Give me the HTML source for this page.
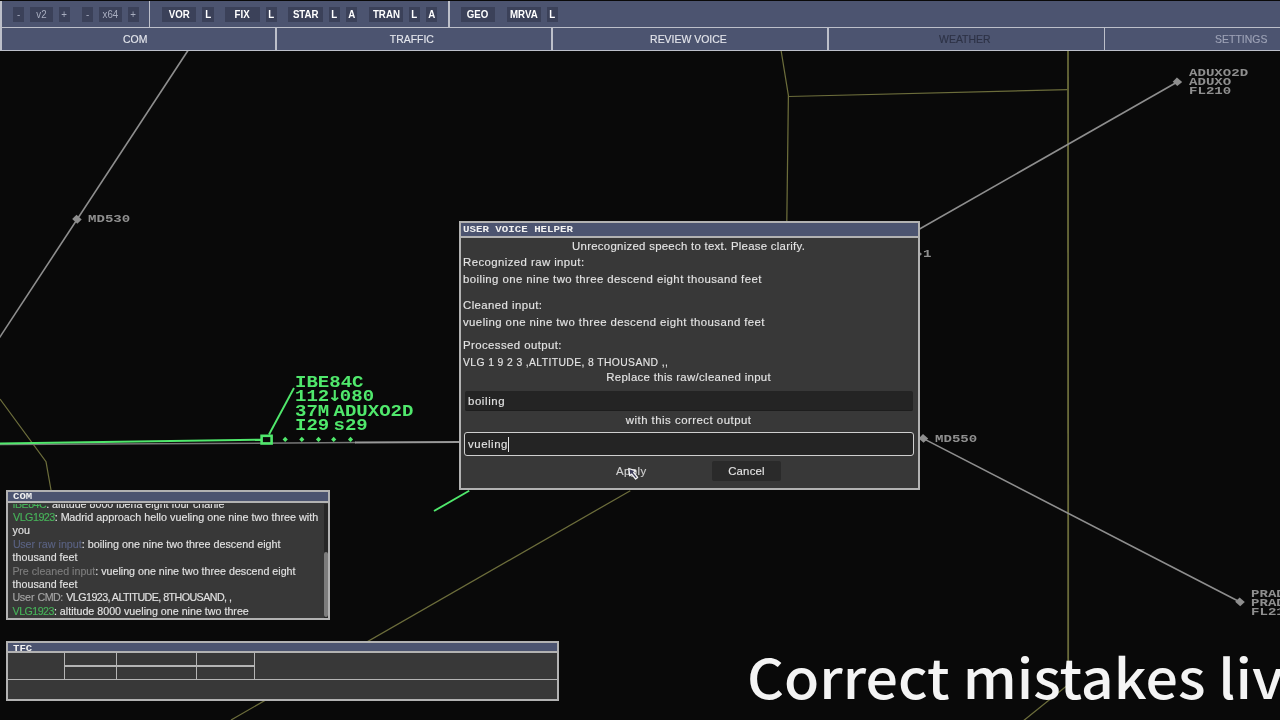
<!DOCTYPE html>
<html lang="en">
<head>
<meta charset="utf-8">
<title>ATC Voice Helper</title>
<style>
html,body{margin:0;padding:0;background:#090909;}
body{width:1280px;height:720px;position:relative;overflow:hidden;font-family:"Liberation Sans",sans-serif;color:#e0e0e0;}
.abs{position:absolute;}
#stage{position:absolute;left:0;top:0;width:1280px;height:720px;overflow:hidden;will-change:transform;}
#radar{position:absolute;left:0;top:0;width:1280px;height:720px;}
/* top bar */
#topbar{position:absolute;left:0;top:1px;width:1280px;height:49px;background:#4c5470;}
#topbar .hl{position:absolute;left:0;width:1280px;height:1.6px;background:#bdc0ca;}
#topbar .vl{position:absolute;width:1.6px;background:#bdc0ca;}
.tb{position:absolute;top:6px;height:15px;background:#3b4159;color:#fff;font-weight:bold;font-size:10.4px;line-height:15.6px;text-align:center;white-space:nowrap;}
.tb.dim{color:#a9aec0;font-weight:normal;}
.tb span{display:inline-block;transform-origin:50% 50%;transform:scaleX(.935);}
.tab{position:absolute;top:28px;height:21px;line-height:21.6px;font-size:11.3px;text-align:center;white-space:nowrap;color:#e4e6ec;}
.tab span{-webkit-text-stroke:.14px currentColor;display:inline-block;transform:scaleX(.925);transform-origin:50% 50%;}
/* windows */
.win{position:absolute;background:#383838;border:2px solid #b2b2b2;box-sizing:border-box;}
.win .title{position:absolute;left:0;top:0;right:0;background:#4c5470;border-bottom:2px solid #b2b2b2;font-family:"Liberation Mono",monospace;font-weight:bold;color:#f0f0f0;white-space:nowrap;overflow:hidden;}
.win .title span{display:inline-block;transform-origin:0 50%;}
.mono{font-family:"Liberation Mono",monospace;font-weight:bold;white-space:nowrap;}
.dl{position:absolute;left:2px;white-space:nowrap;font-size:11.4px;line-height:14px;color:#e4e4e4;letter-spacing:.42px;}
.dc{position:absolute;left:-.9px;width:457px;text-align:center;white-space:nowrap;font-size:11.4px;line-height:14px;color:#e4e4e4;letter-spacing:.49px;}
.cl{position:absolute;left:4.6px;white-space:nowrap;font-size:10.7px;line-height:13.4px;color:#e2e2e2;transform-origin:0 0;}
.u{letter-spacing:-.55px;}
.dl,.dc,.cl{-webkit-text-stroke:.14px currentColor;}
.g{color:#47b35a;}
.b{color:#5a6282;}
.gr{color:#7d7d7d;}
.lg{color:#a6a6a6;}
#big{position:absolute;left:747.4px;top:640px;transform:scaleX(1.061);transform-origin:0 0;font-family:"Noto Sans CJK SC","Liberation Sans",sans-serif;font-weight:500;font-size:54.06px;line-height:72px;color:#f4f4f4;white-space:nowrap;}

.wl{position:absolute;font-size:11.8px;line-height:8.7px;color:#8f8f8f;transform:scaleX(1.192);transform-origin:0 0;padding-top:3px;}
.acl{position:absolute;font-size:16.2px;line-height:14.42px;color:#50e86c;transform:scaleX(1.175);transform-origin:0 0;}
.acl .sp{display:inline-block;width:3.6px;}
.acl .ar{display:inline-block;width:9px;text-align:center;font-family:"DejaVu Sans",sans-serif;font-size:15px;line-height:10px;text-indent:-1.5px;}
</style>
</head>
<body>
<div id="stage">
<svg id="radar" viewBox="0 0 1280 720">
<g fill="none" stroke-linecap="butt">
 <!-- olive sector lines -->
 <g stroke="#6c6d3b" stroke-width="1.25">
  <polyline points="0,399 46,461.7 51,490 53,505"/>
  <polyline points="781,50 788.4,95.5 786.8,222"/>
  <polyline points="788.4,96.5 1067.5,89.6"/>
  <line x1="1068" y1="50" x2="1068.2" y2="685.3" stroke-width="1.8" stroke="#696a3a"/><line x1="1068.4" y1="684.6" x2="1023.7" y2="720.5"/>
  <line x1="231" y1="720" x2="630.3" y2="490.7"/>
 </g>
 <!-- grey route lines -->
 <g stroke="#8e8e8e" stroke-width="1.6">
  <line x1="188.3" y1="50" x2="-1" y2="338.4"/>
  <line x1="1177.3" y1="82" x2="913" y2="232.8"/>
  <line x1="923.4" y1="438.6" x2="1240" y2="602"/>
  <line x1="0" y1="444.6" x2="356" y2="442.6" stroke="#777" stroke-width="1.5"/><line x1="355" y1="442.5" x2="460" y2="441.9" stroke="#999" stroke-width="2"/>
 </g>
 <!-- aircraft track -->
 <g stroke="#50e86c" stroke-width="2">
  <line x1="0" y1="443.6" x2="261" y2="439.7"/>
  <rect x="261.6" y="435.8" width="10" height="7.7" stroke-width="2.6"/>
  <line x1="269" y1="434.5" x2="294" y2="388" stroke-width="1.9"/>
  <line x1="434" y1="511" x2="469.2" y2="490.7" stroke-width="1.9"/>
 </g>
</g>
<g fill="#50e86c">
 <path d="M285.2 436.8l2.6 2.6-2.6 2.6-2.6-2.6z"/>
 <path d="M301.8 436.8l2.6 2.6-2.6 2.6-2.6-2.6z"/>
 <path d="M318.5 436.8l2.6 2.6-2.6 2.6-2.6-2.6z"/>
 <path d="M333.7 436.8l2.6 2.6-2.6 2.6-2.6-2.6z"/>
 <path d="M350.5 436.8l2.6 2.6-2.6 2.6-2.6-2.6z"/>
</g>
<g fill="#8e8e8e">
 <path d="M72.2 219.1l4.3-4.3 5.2 4.6-4.4 4.3z"/>
 <path d="M1172.7 81.7l4.2-4.2 5.3 4.5-4.9 4z"/>
 <path d="M918.6 438.4l4.4-4.4 5.2 4.6-4.6 4.2z"/>
 <path d="M1235.2 601.8l4.4-4.4 5.2 4.6-4.6 4.2z"/>
 <path d="M912.4 253.8l4.4-4.4 5.2 4.6-4.6 4.2z"/>
</g>
</svg>
<div id="topbar">
<div class="hl" style="top:25.9px"></div><div class="hl" style="top:48.6px"></div>
<div class="vl" style="left:.4px;top:0;height:50px"></div>
<div class="vl" style="left:148.5px;top:0;height:27px"></div><div class="vl" style="left:448px;top:0;height:27px"></div><div class="vl" style="left:275.2px;top:27px;height:22px"></div><div class="vl" style="left:551.3px;top:27px;height:22px"></div><div class="vl" style="left:827.4px;top:27px;height:22px"></div><div class="vl" style="left:1103.5px;top:27px;height:22px"></div>
<div class="tb dim" style="left:13px;width:11px"><span>-</span></div><div class="tb dim" style="left:30px;width:23px"><span>v2</span></div><div class="tb dim" style="left:59px;width:11px"><span>+</span></div><div class="tb dim" style="left:82px;width:11px"><span>-</span></div><div class="tb dim" style="left:99px;width:23px"><span>x64</span></div><div class="tb dim" style="left:128px;width:11px"><span>+</span></div><div class="tb" style="left:162px;width:34px"><span>VOR</span></div><div class="tb" style="left:202px;width:12px"><span>L</span></div><div class="tb" style="left:225px;width:35px"><span>FIX</span></div><div class="tb" style="left:266px;width:11px"><span>L</span></div><div class="tb" style="left:288px;width:35px"><span>STAR</span></div><div class="tb" style="left:329px;width:11px"><span>L</span></div><div class="tb" style="left:346px;width:11px"><span>A</span></div><div class="tb" style="left:369px;width:34px"><span>TRAN</span></div><div class="tb" style="left:409px;width:11px"><span>L</span></div><div class="tb" style="left:426px;width:11px"><span>A</span></div><div class="tb" style="left:461px;width:34px"><span>GEO</span></div><div class="tb" style="left:507px;width:34px"><span>MRVA</span></div><div class="tb" style="left:547px;width:11px"><span>L</span></div>
<div class="tab" style="left:75.6px;width:120px;color:#e4e6ec"><span>COM</span></div><div class="tab" style="left:351.8px;width:120px;color:#e4e6ec"><span>TRAFFIC</span></div><div class="tab" style="left:628.3px;width:120px;color:#e4e6ec"><span>REVIEW VOICE</span></div><div class="tab" style="left:904.6px;width:120px;color:#2d3245"><span>WEATHER</span></div><div class="tab" style="left:1180.9px;width:120px;color:#9da2b6"><span>SETTINGS</span></div>
</div>

<!-- waypoint labels -->
<div class="mono wl" style="left:88.2px;top:212px;">MD530</div>
<div class="mono wl" style="left:935px;top:431.8px;">MD550</div>
<div class="mono wl" style="left:1188.6px;top:66.2px;">ADUXO2D<br>ADUXO<br>FL210</div>
<div class="mono wl" style="left:1251px;top:587.2px;">PRADO1B<br>PRADO<br>FL210</div>
<div class="mono wl" style="left:922.6px;top:246.6px;">1</div>
<!-- aircraft label -->
<div class="mono acl" style="left:295.3px;top:375.7px;">IBE84C<br>112<span class="ar">&#8595;</span>080<br>37M<span class="sp"></span>ADUXO2D<br>I29<span class="sp"></span>s29</div>

<!-- USER VOICE HELPER dialog -->
<div class="win" id="dlg" style="left:459px;top:220.7px;width:460.6px;height:269.2px;">
 <div class="title" style="height:13px;font-size:9.1px;line-height:13px;padding-left:2px;"><span style="transform:scaleX(1.185)">USER VOICE HELPER</span></div>
 <div class="dc" style="top:16.2px;letter-spacing:.28px;">Unrecognized speech to text. Please clarify.</div>
 <div class="dl" style="top:32.3px;">Recognized raw input:</div>
 <div class="dl" style="top:49.6px;">boiling one nine two three descend eight thousand feet</div>
 <div class="dl" style="top:75.3px;">Cleaned input:</div>
 <div class="dl" style="top:92.3px;">vueling one nine two three descend eight thousand feet</div>
 <div class="dl" style="top:115.3px;">Processed output:</div>
 <div class="dl" style="top:132.6px;transform:scaleX(.91);transform-origin:0 0;">VLG 1 9 2 3 ,ALTITUDE, 8 THOUSAND ,,</div>
 <div class="dc" style="top:147.5px;letter-spacing:.32px;">Replace this raw/cleaned input</div>
 <div class="abs" style="left:4px;top:168px;width:448px;height:19px;background:#242424;border-bottom:1px solid #1d1d1d;border-radius:2px;"></div>
 <div class="dl" style="left:7px;top:171.4px;letter-spacing:.6px;">boiling</div>
 <div class="dc" style="top:190.5px;">with this correct output</div>
 <div class="abs" style="left:3px;top:209px;width:450.3px;height:24px;box-sizing:border-box;background:#242424;border:1.9px solid #cfcfcf;border-radius:3px;"></div>
 <div class="dl" style="left:7px;top:214.4px;letter-spacing:.55px;">vueling</div>
 <div class="abs" style="left:46.7px;top:214px;width:1.2px;height:15px;background:#e8e8e8;"></div>
 <div class="dl" style="left:155px;top:241.3px;color:#cfcfcf;">Apply</div>
 <div class="abs" style="left:251px;top:238px;width:69px;height:20px;background:#2a2a2a;border-radius:2px;"></div>
 <div class="dl" style="left:251px;width:69px;text-align:center;top:241.3px;letter-spacing:.2px;">Cancel</div>
</div>

<svg class="abs" style="left:620px;top:460px;" width="24" height="24" viewBox="620 460 24 24"><path d="M628.8 468.5L635.6 470.9L633.7 472.5L637.6 477.4L635.6 479L631.7 474.1L629.7 475.7Z" fill="#3b3b58" stroke="#f2f2f2" stroke-width="1.3" stroke-linejoin="round"/></svg>
<!-- COM window -->
<div class="win" id="com" style="left:6px;top:490.2px;width:324px;height:129.8px;">
 <div class="title" style="height:9px;font-size:8.2px;line-height:9px;padding-left:5px;"><span style="transform:scaleX(1.3)">COM</span></div>
 <div class="abs" id="comtxt" style="left:0;top:11.8px;width:316px;height:114px;overflow:hidden;">
  <div class="cl" id="c0" style="top:-6.4px;"><span class="g u">IBE84C</span>: altitude 8000 iberia eight four charlie</div>
  <div class="cl" id="c1" style="top:7px;transform:scaleX(1.01);"><span class="g u">VLG1923</span>: <span class="u">M</span>adrid approach hello vueling one nine two three with</div>
  <div class="cl" id="c2" style="top:20.4px;">you</div>
  <div class="cl" id="c3" style="top:33.8px;transform:scaleX(1.007);"><span class="b"><span class="u">U</span>ser raw input</span>: boiling one nine two three descend eight</div>
  <div class="cl" id="c4" style="top:47.2px;">thousand feet</div>
  <div class="cl" id="c5" style="top:60.6px;"><span class="gr"><span class="u">P</span>re cleaned input</span>: vueling one nine two three descend eight</div>
  <div class="cl" id="c6" style="top:74px;">thousand feet</div>
  <div class="cl" id="c7" style="top:87.4px;"><span class="lg"><span class="u">U</span>ser <span class="u">CMD</span>:</span> <span class="u">VLG1923, ALTITUDE, 8THOUSAND, ,</span></div>
  <div class="cl" id="c8" style="top:100.8px;"><span class="g u">VLG1923</span>: altitude 8000 vueling one nine two three</div>
 </div>
 <div class="abs" style="left:316px;top:11.8px;width:4px;height:114px;background:#262626;"></div>
 <div class="abs" style="left:316px;top:59.8px;width:4px;height:65px;background:#7c7c7c;border-radius:2px;"></div>
</div>

<!-- TFC window -->
<div class="win" id="tfc" style="left:6.3px;top:640.9px;width:552.7px;height:60.4px;">
 <div class="title" style="height:8.6px;font-size:8.2px;line-height:11px;padding-left:5px;"><span style="transform:scaleX(1.3)">TFC</span></div>
 <div class="abs" style="left:0;top:35.8px;width:549px;height:1.3px;background:#b4b4b4;"></div>
 <div class="abs" style="left:56px;top:22.5px;width:191px;height:1.3px;background:#b4b4b4;"></div>
 <div class="abs" style="left:55.6px;top:10px;width:1.3px;height:26px;background:#b4b4b4;"></div>
 <div class="abs" style="left:107.3px;top:10px;width:1.3px;height:26px;background:#b4b4b4;"></div>
 <div class="abs" style="left:187.8px;top:10px;width:1.3px;height:26px;background:#b4b4b4;"></div>
 <div class="abs" style="left:245.3px;top:10px;width:1.3px;height:26px;background:#b4b4b4;"></div>
</div>

<div id="big">Correct mistakes live</div>
</div>
</body>
</html>
